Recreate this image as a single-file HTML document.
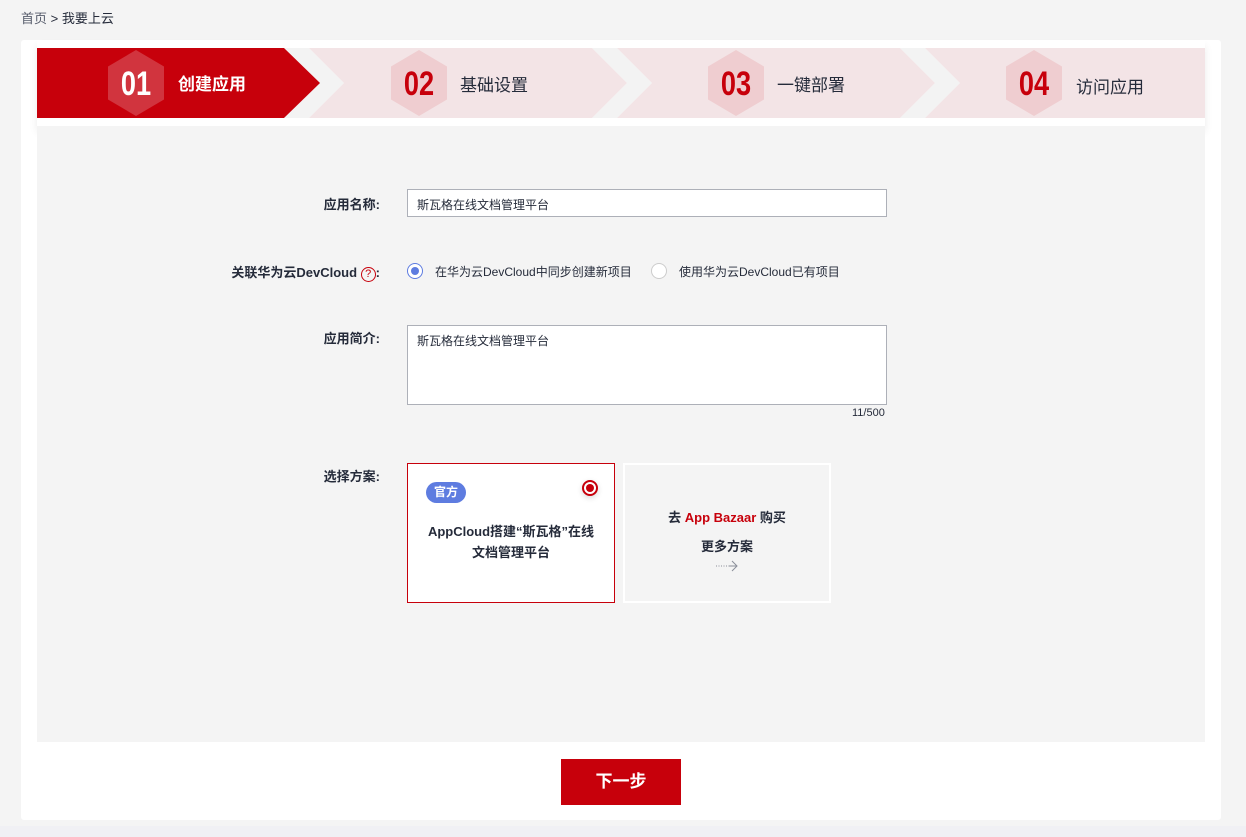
<!DOCTYPE html>
<html><head><meta charset="utf-8"><style>
*{box-sizing:border-box;margin:0;padding:0}
body{width:1246px;height:837px;background:#f4f4f4;font-family:"Liberation Sans","Noto Sans CJK SC",sans-serif;color:#252b3a;position:relative;overflow:hidden}
.a{position:absolute}
.crumb{left:21px;top:8px;font-size:13px;color:#252b3a}
.crumb span{color:#575d6c}
.card{left:21px;top:40px;width:1200px;height:780px;background:#fff;border-radius:3px}
.steps{left:37px;top:40px;width:1168px;height:86px;background:#fff;box-shadow:0 6px 8px rgba(0,0,0,.08)}
.gray{left:37px;top:126px;width:1168px;height:616px;background:#f4f4f4}
.lbl{font-size:13px;font-weight:bold;text-align:right;width:200px;left:180px}
.inp{left:407px;top:189px;width:480px;height:28px;border:1px solid #adb0b8;background:#fff;font-size:12px;padding:6px 9px}
.ta{left:407px;top:325px;width:480px;height:80px;border:1px solid #adb0b8;background:#fff;font-size:12px;padding:6px 9px}
.rtxt{font-size:12px;color:#252b3a}
.btn{left:561px;top:759px;width:120px;height:46px;background:#c7000b;color:#fff;font-size:17px;font-weight:bold;text-align:center;line-height:46px}
</style></head><body>
<div class="a" style="left:0;top:826px;width:1246px;height:11px;background:#f0f0f4"></div>
<div class="a crumb"><span>首页</span> &gt; 我要上云</div>
<div class="a card"></div>
<div class="a steps"></div>
<div class="a gray"></div>
<svg class="a" style="left:0;top:0" width="1246" height="130">
<polygon points="284,48 309,48 344,83 309,118 284,118 319,83" fill="#f3f3f3"/>
<polygon points="592,48 617,48 652,83 617,118 592,118 627,83" fill="#f3f3f3"/>
<polygon points="900,48 925,48 960,83 925,118 900,118 935,83" fill="#f3f3f3"/>
<polygon points="37,48 284,48 320,83 284,118 37,118" fill="#c7000b"/>
<polygon points="309,48 592,48 627,83 592,118 309,118 344,83" fill="#f3e4e6"/>
<polygon points="617,48 900,48 935,83 900,118 617,118 652,83" fill="#f3e4e6"/>
<polygon points="925,48 1205,48 1205,118 925,118 960,83" fill="#f3e4e6"/>
<polygon points="136,50 164,66.5 164,99.5 136,116 108,99.5 108,66.5" fill="#d1343e"/>
<polygon points="419,50 447,66.5 447,99.5 419,116 391,99.5 391,66.5" fill="#efcdd0"/>
<polygon points="736,50 764,66.5 764,99.5 736,116 708,99.5 708,66.5" fill="#efcdd0"/>
<polygon points="1034,50 1062,66.5 1062,99.5 1034,116 1006,99.5 1006,66.5" fill="#efcdd0"/>
<g font-family="Liberation Sans, sans-serif" font-weight="bold" font-size="34" text-anchor="middle">
<text transform="translate(136,95) scale(0.8,1)" fill="#fff">01</text>
<text transform="translate(419,95) scale(0.8,1)" fill="#c7000b">02</text>
<text transform="translate(736,95) scale(0.8,1)" fill="#c7000b">03</text>
<text transform="translate(1034,95) scale(0.8,1)" fill="#c7000b">04</text>
</g>
<g font-family="Liberation Sans, Noto Sans CJK SC, sans-serif" font-size="17">
<text x="178" y="90" fill="#fff" font-weight="bold">创建应用</text>
<text x="460" y="91" fill="#252b3a">基础设置</text>
<text x="777" y="91" fill="#252b3a">一键部署</text>
<text x="1076" y="93" fill="#252b3a">访问应用</text>
</g>
</svg>
<div class="a lbl" style="top:194px">应用名称:</div>
<div class="a inp">斯瓦格在线文档管理平台</div>
<div class="a lbl" style="top:262px">关联华为云DevCloud <span style="display:inline-block;width:15px;height:15px;border:1px solid #c7000b;border-radius:50%;color:#c7000b;font-size:11px;line-height:13px;text-align:center;font-weight:normal">?</span>:</div>
<div class="a" style="left:407px;top:263px;width:16px;height:16px;border:1px solid #5e7ce0;border-radius:50%;background:#fff"><div style="margin:3px;width:8px;height:8px;border-radius:50%;background:#5e7ce0"></div></div>
<div class="a rtxt" style="left:435px;top:263px">在华为云DevCloud中同步创建新项目</div>
<div class="a" style="left:651px;top:263px;width:16px;height:16px;border:1px solid #ccc;border-radius:50%;background:#fff"></div>
<div class="a rtxt" style="left:679px;top:263px">使用华为云DevCloud已有项目</div>
<div class="a lbl" style="top:328px">应用简介:</div>
<div class="a ta">斯瓦格在线文档管理平台</div>
<div class="a" style="left:852px;top:407px;font-size:11px">11/500</div>
<div class="a lbl" style="top:466px">选择方案:</div>
<div class="a" style="left:407px;top:463px;width:208px;height:140px;border:1px solid #c7000b;background:#fff"></div>
<div class="a" style="left:426px;top:482px;width:40px;height:21px;border-radius:11px;background:#5e7ce0;color:#fff;font-size:12px;font-weight:bold;text-align:center;line-height:21px">官方</div>
<div class="a" style="left:582px;top:480px;width:16px;height:16px;border:2px solid #c7000b;border-radius:50%;background:#fff;box-shadow:0 2px 6px rgba(0,0,0,.15)"><div style="margin:2px;width:8px;height:8px;border-radius:50%;background:#c7000b"></div></div>
<div class="a" style="left:407px;top:521px;width:208px;text-align:center;font-size:13px;font-weight:bold;line-height:21px">AppCloud搭建“斯瓦格”在线<br>文档管理平台</div>
<div class="a" style="left:623px;top:463px;width:208px;height:140px;border:2px solid #fff;background:#f4f4f4"></div>
<div class="a" style="left:623px;top:507px;width:208px;text-align:center;font-size:13px;font-weight:bold">去 <span style="color:#c7000b">App Bazaar</span> 购买</div>
<div class="a" style="left:623px;top:536px;width:208px;text-align:center;font-size:13px;font-weight:bold">更多方案</div>
<svg class="a" style="left:715px;top:559px" width="24" height="14"><path d="M1 7H14" stroke="#8a8e99" stroke-dasharray="1 1.5"/><path d="M14 7H22M17 2L22 7L17 12" stroke="#8a8e99" fill="none"/></svg>
<div class="a btn">下一步</div>
</body></html>
